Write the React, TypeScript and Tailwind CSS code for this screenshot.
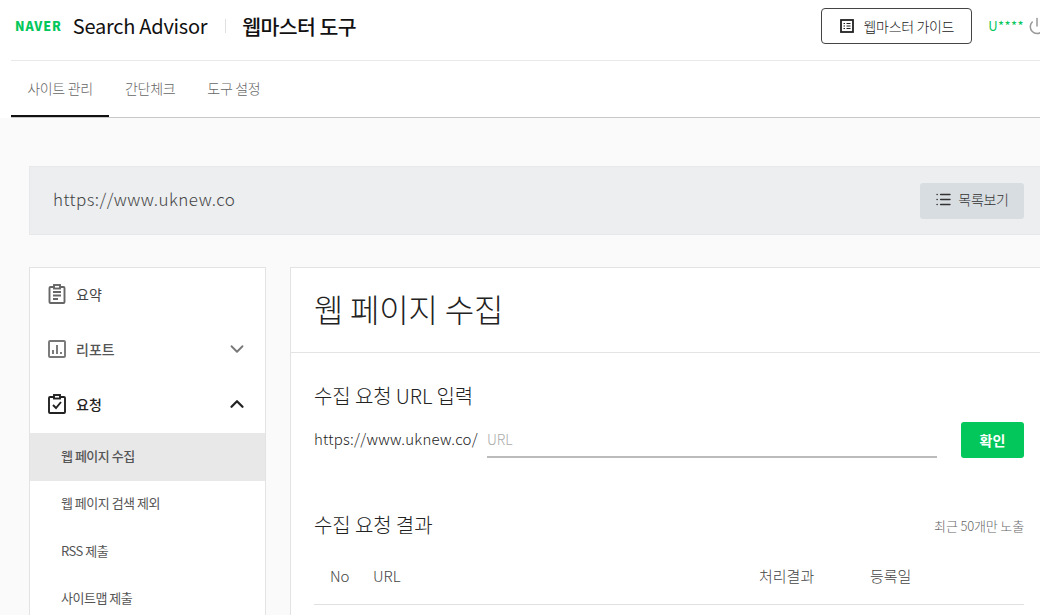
import { ChevronDown, ChevronUp, List, Power } from 'lucide-react';

const font = { fontFamily: '"Noto Sans CJK KR", "Noto Sans", sans-serif' };

function SummaryIcon() {
  return (
    <svg width="20" height="20" viewBox="0 0 20 20" fill="none" stroke="#666" strokeWidth="1.9">
      <rect x="2.500" y="3" width="15" height="16" rx="1" />
      <rect x="7" y="1" width="6" height="3.500" fill="#fff" />
      <path d="M6 8h8M6 11.500h8M6 15h5" />
    </svg>
  );
}

function ReportIcon() {
  return (
    <svg width="20" height="20" viewBox="0 0 20 20" fill="none" stroke="#777" strokeWidth="1.9">
      <rect x="2" y="2" width="16" height="16" rx="1" />
      <path d="M6 15v-4M10 15V6M14 15v-2" />
    </svg>
  );
}

function RequestIcon() {
  return (
    <svg width="20" height="20" viewBox="0 0 20 20" fill="none" stroke="#222" strokeWidth="1.9">
      <rect x="2" y="3" width="16" height="16" rx="1" />
      <rect x="7" y="1" width="6" height="3.500" fill="#fff" />
      <path d="M6 11l3 3 5-6" />
    </svg>
  );
}

function GuideIcon() {
  return (
    <svg width="14" height="14" viewBox="0 0 14 14" fill="none" stroke="#222">
      <rect x="1" y="1" width="12" height="12" strokeWidth="1.800" />
      <path d="M3.500 4.500h1.500M6.500 4.500h4M3.500 7h1.500M6.500 7h4M3.500 9.500h1.500M6.500 9.500h4" />
    </svg>
  );
}

function SubItem({ label, active }: { label: string; active?: boolean }) {
  return (
    <div
      className={`flex h-[47.500px] items-center pb-[3px] pl-[31px] text-[13px] tracking-[-0.500px] text-[#555] ${
        active ? 'bg-[#e8e8e8] font-medium' : ''
      }`}
    >
      {label}
    </div>
  );
}

export default function App() {
  return (
    <div style={font} className="h-[615px] w-[1040px] overflow-hidden bg-[#fafafa]">
      <header className="bg-white pl-[11px]">
        <div className="flex h-[61px] items-center border-b border-[#e9e9e9] pb-[8px]">
          <span className="ml-[4px] text-[12.500px] font-black leading-none tracking-[0.900px] text-[#03c75a]">
            NAVER
          </span>
          <span className="ml-[11px] text-[20px] leading-none tracking-[-0.250px] text-[#111]">Search Advisor</span>
          <span className="ml-[18px] h-[14px] w-px bg-[#e0e0e0]" />
          <span className="ml-[16px] text-[20.500px] font-medium leading-none tracking-[-0.600px] text-[#111]">
            웹마스터 도구
          </span>
          <div className="ml-auto flex shrink-0 items-center">
            <button className="flex h-[36px] w-[151px] items-center justify-center gap-[10px] rounded-[4px] border border-[#444] bg-white text-[14px] font-light tracking-[-0.350px] text-[#222]">
              <GuideIcon />
              웹마스터 가이드
            </button>
            <span className="ml-[16px] text-[13px] tracking-[0.400px] text-[#03c75a]">U****</span>
            <Power size={18} className="ml-[4px] mr-[-6px] text-[#999]" />
          </div>
        </div>
        <nav className="flex h-[57px] border-b border-[#c8c8c8] pb-[2px] text-[14px] font-light tracking-[-0.300px] text-[#666]">
          <div className="mb-[-2px] flex w-[98px] items-center justify-center border-b-2 border-[#111]">사이트 관리</div>
          <div className="ml-[16px] flex items-center">간단체크</div>
          <div className="ml-[32px] flex items-center">도구 설정</div>
        </nav>
      </header>

      <div className="pl-[29px] pt-[48px]">
        <div className="mr-[-8px] flex h-[69px] items-center justify-between border border-[#e6e8ea] bg-[#eceef0] pl-[23px] pr-[23px]">
          <span className="mb-[3px] text-[17px] font-light tracking-[0.450px] text-[#444]">https://www.uknew.co</span>
          <button className="flex h-[36px] w-[104px] items-center justify-center gap-[6px] rounded-[3px] bg-[#d8dde1] pb-[2px] text-[14px] font-light tracking-[-0.300px] text-[#333]">
            <List size={17} strokeWidth={2.250} />
            목록보기
          </button>
        </div>

        <div className="mt-[32px] flex gap-[24px]">
          <aside className="h-[400px] w-[237px] shrink-0 border border-[#e3e3e3] bg-white">
            <div className="flex h-[55px] items-center gap-[9px] pb-[3px] pl-[17px] text-[14px] text-[#444]">
              <SummaryIcon />
              요약
            </div>
            <div className="flex h-[55px] items-center gap-[9px] pb-[3px] pl-[17px] pr-[17px] text-[14px] font-medium text-[#555]">
              <ReportIcon />
              리포트
              <ChevronDown size={22} strokeWidth={2} className="ml-auto text-[#777]" />
            </div>
            <div className="flex h-[55px] items-center gap-[9px] pb-[3px] pl-[17px] pr-[17px] text-[14px] font-medium text-[#222]">
              <RequestIcon />
              요청
              <ChevronUp size={22} strokeWidth={2.500} className="ml-auto text-[#222]" />
            </div>
            <SubItem label="웹 페이지 수집" active />
            <SubItem label="웹 페이지 검색 제외" />
            <SubItem label="RSS 제출" />
            <SubItem label="사이트맵 제출" />
          </aside>

          <main className="h-[400px] w-[800px] shrink-0 border border-[#e3e3e3] bg-white">
            <div className="flex h-[85px] items-center border-b border-[#e3e3e3] pb-[4px] pl-[23px] text-[32px] font-light tracking-[-0.200px] text-[#222]">
              웹 페이지 수집
            </div>
            <div className="w-[733px] pl-[23px]">
              <h2 className="mt-[29px] text-[20px] font-light leading-[28px] tracking-[-0.100px] text-[#222]">수집 요청 URL 입력</h2>
              <div className="mt-[12px] flex items-start">
                <span className="mt-[6px] text-[15px] font-light leading-[22px] tracking-[0.240px] text-[#222]">https://www.uknew.co/</span>
                <div className="ml-[9px] h-[36px] flex-1 border-b-2 border-[#bbb] pt-[6px] text-[14px] font-light leading-[22px] text-[#aaa]">
                  URL
                </div>
                <button className="ml-[24px] h-[36px] w-[63px] rounded-[3px] bg-[#03c75a] text-[14px] font-bold text-white">
                  확인
                </button>
              </div>
              <div className="mt-[53px] flex items-center justify-between">
                <h2 className="text-[20px] font-light leading-[28px] tracking-[-0.100px] text-[#222]">수집 요청 결과</h2>
                <span className="mt-[2px] text-[13px] font-light tracking-[-0.150px] text-[#666]">최근 50개만 노출</span>
              </div>
              <div className="mt-[14px] flex h-[52px] items-center border-b border-[#e0e0e0] pb-[4px] text-[15px] font-light text-[#444]">
                <span className="ml-[16px] w-[43px]">No</span>
                <span className="w-[386px]">URL</span>
                <span className="w-[111px]">처리결과</span>
                <span>등록일</span>
              </div>
            </div>
          </main>
        </div>
      </div>
    </div>
  );
}
